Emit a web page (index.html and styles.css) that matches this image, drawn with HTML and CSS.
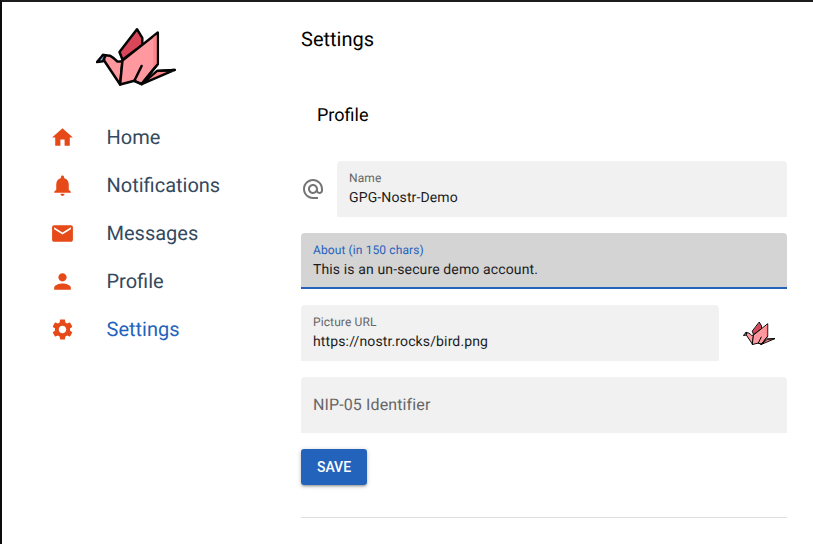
FILE: index.html
```html
<!DOCTYPE html>
<html lang="en">
<head>
<meta charset="utf-8">
<title>Settings</title>
<link rel="stylesheet" href="styles.css">
</head>
<body>
<svg width="0" height="0" class="defs" aria-hidden="true">
  <symbol id="bird" viewBox="18 20 242 182">
    <g stroke="#050505" stroke-width="7.500" stroke-linejoin="round" stroke-linecap="round">
      <path fill="#d9465a" d="M142 27 L158 53 L158 75 L98 119 L89 96 Z"/>
      <path fill="#ff999f" d="M39 105 L60 107 Q74 115 83 125 L98 124 L91 194 L44 124 Z"/>
      <path fill="#ff999f" d="M98 122 L205 37 L205 132 L156 193 L134 183 L91 194 Z"/>
      <path fill="#ff858b" d="M156 193 L203 153 L256 150 Z"/>
      <path fill="none" d="M203 153 L256 150 M134 183 L156 138 M134 183 L156 193 L205 132"/>
      <path fill="#8fb3ed" d="M39 105 L21 126 L39 124 L47 106 Z"/>
    </g>
    <path fill="#ff858b" d="M191 53 L201 44 L201 131 L191 142 Z"/>
  </symbol>
</svg>
<div class="layout">
  <aside class="sidebar">
    <svg class="logo"><use href="#bird"/></svg>
    <nav class="nav">
      <a class="nav-item"><svg viewBox="0 0 24 24"><path d="M10 20v-6h4v6h5v-8h3L12 3 2 12h3v8z"/></svg><span>Home</span></a>
      <a class="nav-item"><svg viewBox="0 0 24 24"><path d="M12 22c1.100 0 2-.9 2-2h-4c0 1.100.89 2 2 2zm6-6v-5c0-3.070-1.640-5.640-4.500-6.320V4c0-.83-.67-1.500-1.500-1.500s-1.500.67-1.500 1.500v.68C7.630 5.360 6 7.920 6 11v5l-2 2v1h16v-1l-2-2z"/></svg><span>Notifications</span></a>
      <a class="nav-item"><svg viewBox="0 0 24 24"><path d="M20 4H4c-1.100 0-1.990.9-1.990 2L2 18c0 1.100.9 2 2 2h16c1.100 0 2-.9 2-2V6c0-1.100-.9-2-2-2zm0 4l-8 5-8-5V6l8 5 8-5v2z"/></svg><span>Messages</span></a>
      <a class="nav-item"><svg viewBox="0 0 24 24"><path d="M12 12c2.210 0 4-1.790 4-4s-1.790-4-4-4-4 1.790-4 4 1.790 4 4 4zm0 2c-2.670 0-8 1.340-8 4v2h16v-2c0-2.660-5.330-4-8-4z"/></svg><span>Profile</span></a>
      <a class="nav-item active"><svg viewBox="0 0 24 24"><path d="M19.140 12.940c.04-.3.06-.61.06-.94 0-.32-.02-.64-.07-.94l2.030-1.580c.18-.14.23-.41.12-.61l-1.920-3.320c-.12-.22-.37-.29-.59-.22l-2.390.96c-.5-.38-1.030-.7-1.620-.94l-.36-2.540c-.04-.24-.24-.41-.48-.41h-3.840c-.24 0-.43.17-.47.41l-.36 2.540c-.59.24-1.130.57-1.620.94l-2.390-.96c-.22-.08-.47 0-.59.22L2.740 8.870c-.12.21-.08.47.12.61l2.030 1.580c-.05.3-.09.63-.09.94s.02.64.07.94l-2.030 1.580c-.18.14-.23.41-.12.61l1.920 3.320c.12.22.37.29.59.22l2.390-.96c.5.38 1.030.7 1.620.94l.36 2.540c.05.24.24.41.48.41h3.840c.24 0 .44-.17.47-.41l.36-2.540c.59-.24 1.130-.56 1.620-.94l2.390.96c.22.08.47 0 .59-.22l1.920-3.320c.12-.22.07-.47-.12-.61l-2.010-1.580zM12 15.600c-1.980 0-3.600-1.620-3.600-3.600s1.620-3.600 3.600-3.600 3.600 1.620 3.600 3.600-1.620 3.600-3.600 3.600z"/></svg><span>Settings</span></a>
    </nav>
  </aside>
  <main class="main">
    <h1>Settings</h1>
    <h2>Profile</h2>
    <form class="form">
      <div class="row">
        <svg class="at" viewBox="0 0 24 24"><path d="M12 1.950c-5.520 0-10 4.480-10 10s4.480 10 10 10h5v-2h-5c-4.340 0-8-3.660-8-8s3.660-8 8-8 8 3.660 8 8v1.430c0 .79-.71 1.570-1.500 1.570s-1.500-.78-1.500-1.570v-1.430c0-2.760-2.240-5-5-5s-5 2.240-5 5 2.240 5 5 5c1.380 0 2.640-.56 3.540-1.470.65.89 1.770 1.470 2.960 1.470 1.970 0 3.500-1.600 3.500-3.570v-1.430c0-5.520-4.480-10-10-10zm0 13c-1.660 0-3-1.340-3-3s1.340-3 3-3 3 1.340 3 3-1.340 3-3 3z"/></svg>
        <div class="field"><span class="label">Name</span><span class="value">GPG-Nostr-Demo</span></div>
      </div>
      <div class="field focused"><span class="label">About (in 150 chars)</span><span class="value">This is an un-secure demo account.</span></div>
      <div class="row">
        <div class="field"><span class="label">Picture URL</span><span class="value">https://nostr.rocks/bird.png</span></div>
        <svg class="avatar"><use href="#bird"/></svg>
      </div>
      <div class="field empty"><span class="placeholder">NIP-05 Identifier</span></div>
      <button type="button" class="save">SAVE</button>
    </form>
    <hr>
  </main>
</div>
</body>
</html>
```
FILE: styles.css
```css
* { box-sizing: border-box; }

body {
  margin: 0;
  height: 544px;
  overflow: hidden;
  background: #fff;
  border-left: 2px solid #0b0c10;
  border-top: 2px solid #1c1c1f;
  font-family: Roboto, sans-serif;
  color: #000;
  text-rendering: geometricPrecision;
}

.defs { display: block; }

.layout { display: flex; }

.sidebar { width: 299px; padding: 24px 0 0 48px; }

.logo {
  display: block;
  width: 80px;
  height: 62px;
  margin-left: 46px;
}

.nav { margin-top: 25px; }

.nav-item {
  display: flex;
  align-items: center;
  height: 48px;
  font-size: 20px;
  color: #34495e;
}

.nav-item svg {
  width: 25px;
  height: 25px;
  margin-right: 31.500px;
  fill: #e64a19;
}

.nav-item.active { color: #2463bc; }

.main { width: 486px; }

h1 {
  margin: 21px 0 0;
  font-size: 20px;
  line-height: 32px;
  font-weight: 400;
}

h2 {
  margin: 45px 0 0 16px;
  font-size: 18px;
  line-height: 32px;
  font-weight: 400;
}

.form {
  display: flex;
  flex-direction: column;
  gap: 16px;
  margin-top: 29px;
}

.row { display: flex; align-items: center; }

.at {
  width: 24px;
  height: 24px;
  margin-right: 12px;
  fill: #757575;
}

.field {
  flex: 1 0 56px;
  height: 56px;
  padding: 9px 12px 0;
  display: flex;
  flex-direction: column;
  border-radius: 4px 4px 0 0;
  background: #f1f1f1;
}

.focused {
  background: #d4d4d4;
  border-bottom: 2px solid #2463bc;
}

.label {
  font-size: 12px;
  line-height: 16px;
  letter-spacing: .11px;
  color: #666;
}

.focused .label { color: #2463bc; }

.value {
  font-size: 14px;
  line-height: 24px;
  letter-spacing: .13px;
  color: #1d1d1d;
}

.empty { justify-content: center; padding-top: 0; }

.placeholder {
  font-size: 16px;
  line-height: 20px;
  letter-spacing: .12px;
  color: #666;
}

.avatar {
  width: 32px;
  height: 25px;
  margin: 0 12px 0 24px;
}

.save {
  align-self: flex-start;
  width: 66px;
  height: 36px;
  padding: 0;
  border: 0;
  border-radius: 3px;
  background: #2463bc;
  color: #fff;
  font: 500 14px/24px Roboto, sans-serif;
  box-shadow: 0 1px 5px rgba(0, 0, 0, .2), 0 2px 2px rgba(0, 0, 0, .14), 0 3px 1px -2px rgba(0, 0, 0, .12);
}

hr {
  height: 1px;
  margin: 32px 0 0;
  border: 0;
  background: #e0e0e0;
}
```
